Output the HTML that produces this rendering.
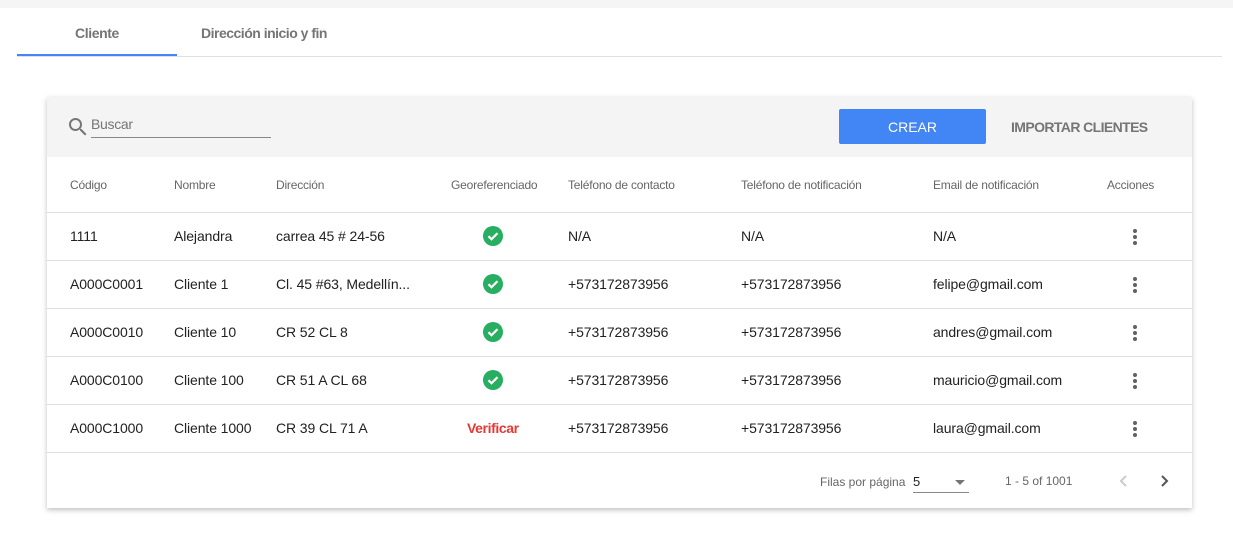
<!DOCTYPE html>
<html><head><meta charset="utf-8"><style>
*{box-sizing:border-box;margin:0;padding:0}
body{width:1233px;height:534px;background:#fff;font-family:"Liberation Sans",Arial,sans-serif;position:relative;overflow:hidden;color:#212121}
.a{position:absolute;white-space:nowrap}
.hd{font-size:12px;color:#666;top:178px;letter-spacing:-0.2px}
.row{position:absolute;left:47px;width:1145px;height:48px;border-top:1px solid #e0e0e0}
.c{position:absolute;top:15px;font-size:14px;color:#212121;white-space:nowrap;letter-spacing:-0.1px}
.dots{position:absolute;left:1086px;top:16px;width:4px}
.dots i{display:block;width:4px;height:4px;border-radius:2px;background:#616161;margin-bottom:2px}
</style></head><body>
<div class="a" style="left:0;top:0;width:1233px;height:8px;background:#f5f5f5"></div>
<div class="a" style="left:75px;top:25px;font-size:14px;font-weight:bold;color:#757575;letter-spacing:-0.4px">Cliente</div>
<div class="a" style="left:201px;top:25px;font-size:14px;font-weight:bold;color:#757575;letter-spacing:-0.5px">Dirección inicio y fin</div>
<div class="a" style="left:17px;top:56px;width:1205px;height:1px;background:#e0e0e0"></div>
<div class="a" style="left:17px;top:54px;width:160px;height:2px;background:#4285f4"></div>

<div class="a" style="left:47px;top:97px;width:1145px;height:411px;background:#fff;box-shadow:0 2px 5px rgba(0,0,0,.25)"></div>
<div class="a" style="left:47px;top:97px;width:1145px;height:60px;background:#f4f4f4"></div>
<svg class="a" style="left:66px;top:115px" width="24" height="24" viewBox="0 0 24 24"><path fill="#757575" d="M15.5 14h-.79l-.28-.27A6.47 6.47 0 0 0 16 9.5 6.5 6.5 0 1 0 9.5 16c1.61 0 3.09-.59 4.23-1.57l.27.28v.79l5 4.99L20.49 19l-4.99-5zm-6 0C7.01 14 5 11.99 5 9.5S7.01 5 9.5 5 14 7.01 14 9.5 11.99 14 9.5 14z"/></svg>
<div class="a" style="left:91px;top:116px;font-size:14px;color:#757575;letter-spacing:-0.3px">Buscar</div>
<div class="a" style="left:91px;top:137px;width:180px;height:1px;background:#888"></div>
<div class="a" style="left:839px;top:109px;width:147px;height:35px;background:#4285f4;border-radius:2px;color:#fff;font-size:14px;text-align:center;line-height:36px">CREAR</div>
<div class="a" style="left:1011px;top:119px;font-size:14px;font-weight:bold;color:#757575;letter-spacing:-0.6px">IMPORTAR CLIENTES</div>

<div class="a hd" style="left:70px">Código</div>
<div class="a hd" style="left:174px">Nombre</div>
<div class="a hd" style="left:276px">Dirección</div>
<div class="a hd" style="left:451px">Georeferenciado</div>
<div class="a hd" style="left:568px">Teléfono de contacto</div>
<div class="a hd" style="left:741px">Teléfono de notificación</div>
<div class="a hd" style="left:933px">Email de notificación</div>
<div class="a hd" style="left:1107px">Acciones</div>

<div class="row" style="top:212px"><div class="c" style="left:23px">1111</div><div class="c" style="left:127px">Alejandra</div><div class="c" style="left:229px">carrea 45 # 24-56</div><svg style="position:absolute;left:436px;top:13px" width="20" height="20" viewBox="0 0 20 20"><circle cx="10" cy="10" r="10" fill="#27ae60"/><path d="M5.5 10.2l3 3 6-6" stroke="#fff" stroke-width="2.2" fill="none"/></svg><div class="c" style="left:521px">N/A</div><div class="c" style="left:694px">N/A</div><div class="c" style="left:886px">N/A</div><div class="dots"><i></i><i></i><i></i></div></div>
<div class="row" style="top:260px"><div class="c" style="left:23px">A000C0001</div><div class="c" style="left:127px">Cliente 1</div><div class="c" style="left:229px">Cl. 45 #63, Medellín...</div><svg style="position:absolute;left:436px;top:13px" width="20" height="20" viewBox="0 0 20 20"><circle cx="10" cy="10" r="10" fill="#27ae60"/><path d="M5.5 10.2l3 3 6-6" stroke="#fff" stroke-width="2.2" fill="none"/></svg><div class="c" style="left:521px">+573172873956</div><div class="c" style="left:694px">+573172873956</div><div class="c" style="left:886px">felipe@gmail.com</div><div class="dots"><i></i><i></i><i></i></div></div>
<div class="row" style="top:308px"><div class="c" style="left:23px">A000C0010</div><div class="c" style="left:127px">Cliente 10</div><div class="c" style="left:229px">CR 52 CL 8</div><svg style="position:absolute;left:436px;top:13px" width="20" height="20" viewBox="0 0 20 20"><circle cx="10" cy="10" r="10" fill="#27ae60"/><path d="M5.5 10.2l3 3 6-6" stroke="#fff" stroke-width="2.2" fill="none"/></svg><div class="c" style="left:521px">+573172873956</div><div class="c" style="left:694px">+573172873956</div><div class="c" style="left:886px">andres@gmail.com</div><div class="dots"><i></i><i></i><i></i></div></div>
<div class="row" style="top:356px"><div class="c" style="left:23px">A000C0100</div><div class="c" style="left:127px">Cliente 100</div><div class="c" style="left:229px">CR 51 A CL 68</div><svg style="position:absolute;left:436px;top:13px" width="20" height="20" viewBox="0 0 20 20"><circle cx="10" cy="10" r="10" fill="#27ae60"/><path d="M5.5 10.2l3 3 6-6" stroke="#fff" stroke-width="2.2" fill="none"/></svg><div class="c" style="left:521px">+573172873956</div><div class="c" style="left:694px">+573172873956</div><div class="c" style="left:886px">mauricio@gmail.com</div><div class="dots"><i></i><i></i><i></i></div></div>
<div class="row" style="top:404px"><div class="c" style="left:23px">A000C1000</div><div class="c" style="left:127px">Cliente 1000</div><div class="c" style="left:229px">CR 39 CL 71 A</div><div class="c" style="left:420px;color:#e53935;font-weight:bold;letter-spacing:-0.4px">Verificar</div><div class="c" style="left:521px">+573172873956</div><div class="c" style="left:694px">+573172873956</div><div class="c" style="left:886px">laura@gmail.com</div><div class="dots"><i></i><i></i><i></i></div></div>
<div class="row" style="top:452px;height:1px"></div>

<div class="a" style="left:820px;top:475px;font-size:12px;color:#666">Filas por página</div>
<div class="a" style="left:913px;top:474px;font-size:13px;color:#212121">5</div>
<div class="a" style="left:913px;top:492px;width:56px;height:1px;background:#888"></div>
<div class="a" style="left:955px;top:480px;width:0;height:0;border-left:5px solid transparent;border-right:5px solid transparent;border-top:5px solid #757575"></div>
<div class="a" style="left:1005px;top:474px;font-size:12px;color:#666">1 - 5 of 1001</div>
<svg class="a" style="left:1116px;top:473px" width="16" height="16" viewBox="0 0 16 16"><path d="M10 3l-5 5 5 5" stroke="#ccc" stroke-width="2" fill="none"/></svg>
<svg class="a" style="left:1156px;top:473px" width="16" height="16" viewBox="0 0 16 16"><path d="M6 3l5 5-5 5" stroke="#555" stroke-width="2" fill="none"/></svg>
</body></html>
